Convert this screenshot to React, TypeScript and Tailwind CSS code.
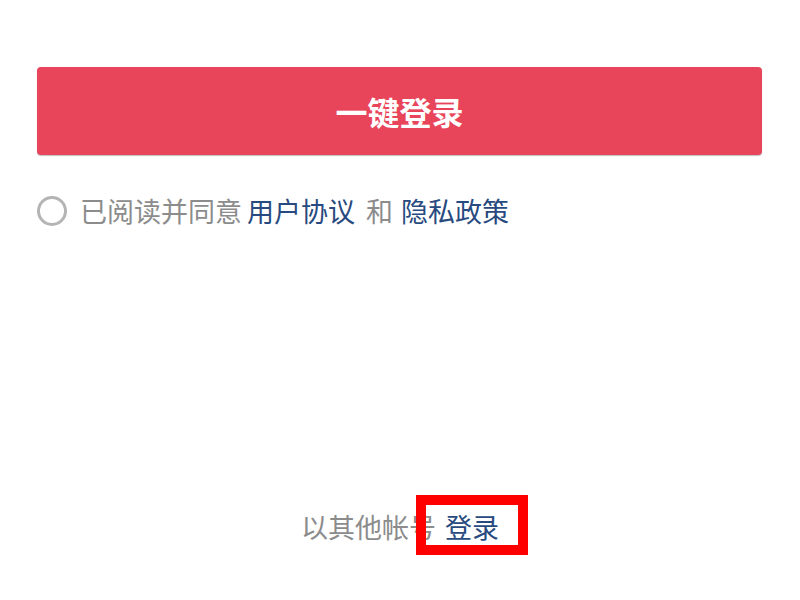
import { useState } from "react";

const font = { fontFamily: '"Noto Sans CJK SC", "Noto Sans", sans-serif' };

export default function App() {
  const [agreed, setAgreed] = useState(false);

  return (
    <div className="relative h-[600px] w-[800px] bg-white" style={font}>
      <div className="flex flex-col px-[37px] pt-[67px]">
        <button
          type="button"
          className="flex h-[88px] w-[725px] items-center justify-center rounded-[4px] bg-[#e8445a] text-[32px] font-bold text-white shadow-[0_1px_1px_rgba(0,0,0,0.25)]"
        >
          一键登录
        </button>

        <div className="mt-[41px] flex h-[30px] items-center text-[27px] leading-[30px]">
          <button
            type="button"
            onClick={() => setAgreed(!agreed)}
            className="mr-[13px] h-[30px] w-[30px] rounded-full border-[3px] border-[#b4b4b4]"
          />
          <span className="text-[#8c8c8c]">已阅读并同意</span>
          <span className="ml-[5px] text-[#284a80]">用户协议</span>
          <span className="ml-[11px] text-[#8c8c8c]">和</span>
          <span className="ml-[8px] text-[#284a80]">隐私政策</span>
        </div>

        <div className="mt-[286px] flex h-[30px] items-center justify-center text-[27px] leading-[30px]">
          <span className="text-[#8c8c8c]">以其他帐号</span>
          <span className="ml-[9px] text-[#284a80]">登录</span>
        </div>
      </div>

      <div className="absolute left-[416px] top-[495px] h-[60px] w-[112px] border-[10px] border-[#ff0000]" />
    </div>
  );
}
